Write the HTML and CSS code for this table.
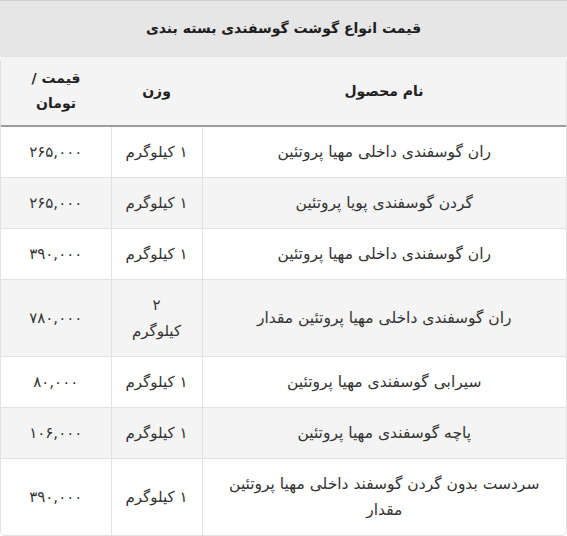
FILE: index.html
```html
<!DOCTYPE html>
<html lang="fa" dir="rtl">
<head>
<meta charset="utf-8">
<title>قیمت انواع گوشت گوسفندی بسته بندی</title>
<link rel="stylesheet" href="styles.css">
</head>
<body>
<div class="title">قیمت انواع گوشت گوسفندی بسته بندی</div>
<div class="wrap">
<table class="prices">
<colgroup>
<col class="c-name">
<col class="c-weight">
<col class="c-price">
</colgroup>
<thead>
<tr><th>نام محصول</th><th>وزن</th><th>قیمت /<br>تومان</th></tr>
</thead>
<tbody>
<tr><td>ران گوسفندی داخلی مهیا پروتئین</td><td>۱ کیلوگرم</td><td>۲۶۵,۰۰۰</td></tr>
<tr><td>گردن گوسفندی پویا پروتئین</td><td>۱ کیلوگرم</td><td>۲۶۵,۰۰۰</td></tr>
<tr><td>ران گوسفندی داخلی مهیا پروتئین</td><td>۱ کیلوگرم</td><td>۳۹۰,۰۰۰</td></tr>
<tr><td>ران گوسفندی داخلی مهیا پروتئین مقدار</td><td>۲<br>کیلوگرم</td><td>۷۸۰,۰۰۰</td></tr>
<tr><td>سیرابی گوسفندی مهیا پروتئین</td><td>۱ کیلوگرم</td><td>۸۰,۰۰۰</td></tr>
<tr><td>پاچه گوسفندی مهیا پروتئین</td><td>۱ کیلوگرم</td><td>۱۰۶,۰۰۰</td></tr>
<tr><td>سردست بدون گردن گوسفند داخلی مهیا پروتئین<br>مقدار</td><td>۱ کیلوگرم</td><td>۳۹۰,۰۰۰</td></tr>
</tbody>
</table>
</div>
</body>
</html>
```
FILE: styles.css
```css
html, body {
  margin: 0;
  padding: 0;
  background: #ffffff;
}
body {
  font-family: "DejaVu Sans", "Noto Sans", sans-serif;
  font-size: 14px;
  color: #333333;
  width: 567px;
}
.title {
  background: #e6e6e6;
  border-top: 1px solid #cfcfcf;
  padding: 15px 8px 16px;
  line-height: 25px;
  text-align: center;
  font-weight: bold;
  color: #1e1e1e;
}
.wrap {
  margin-top: -1px;
  width: 565px;
  border: 1px solid #e2e2e2;
  border-radius: 5px;
  overflow: hidden;
  background: #ffffff;
}
.prices {
  width: 100%;
  border-collapse: collapse;
  table-layout: fixed;
}
.c-name { width: 364px; }
.c-weight { width: 91px; }
.c-price { width: 110px; }
.prices th {
  background: #f4f4f4;
  font-weight: bold;
  color: #222222;
  line-height: 25px;
  padding: 9px 6px;
  text-align: center;
  border-bottom: 2px solid #9d9d9d;
}
.prices td {
  font-size: 15px;
  line-height: 26px;
  padding: 12px 6px;
  text-align: center;
  vertical-align: middle;
  border-top: 1px solid #e2e2e2;
  border-left: 1px solid #e2e2e2;
}
.prices td:first-child { font-size: 15.5px; }
.prices tbody tr:first-child td { border-top: none; }
.prices td:last-child { border-left: none; }
.prices tbody tr:nth-child(even) td { background: #f4f4f4; }
```
